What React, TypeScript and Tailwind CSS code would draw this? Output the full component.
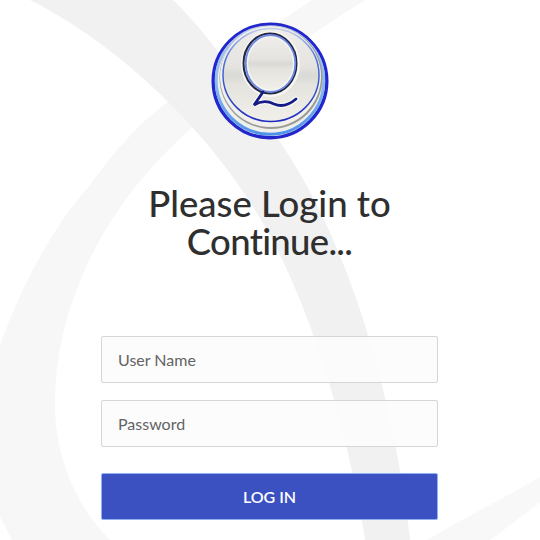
const fieldClass =
  "h-[47px] w-full rounded-[2px] border border-[#d6d6d6] bg-[#fcfcfc]/90 px-4 text-[16px] text-[#555] placeholder:text-[#636363] outline-none";

function Backdrop() {
  return (
    <svg className="absolute inset-0 h-full w-full" viewBox="0 0 540 540">
      <path
        d="M365 0C310 35 250 75 193 127C130 180 55 280 55 405C55 455 75 505 110 540H12L0 517V345C20 290 50 230 90 185C115 150 140 122 170 100C210 70 260 35 312 0Z"
        fill="#f7f7f7"
      />
      <path
        d="M30 0C110 40 200 120 255 210C300 280 345 410 365 540H410C398 430 360 260 282 145C250 95 210 35 173 0Z"
        fill="#f1f1f1"
      />
      <path d="M540 477C505 498 465 517 427 540H490C505 530 522 515 540 503Z" fill="#f8f8f8" />
    </svg>
  );
}

function Logo() {
  return (
    <svg className="block h-[120px] w-[120px]" viewBox="0 0 120 120">
      <defs>
        <linearGradient id="face" x1="0" y1="0" x2="0" y2="1">
          <stop offset="0" stopColor="#efeeea" />
          <stop offset="0.42" stopColor="#e4e3df" />
          <stop offset="0.5" stopColor="#d9d9d5" />
          <stop offset="0.6" stopColor="#e4e3de" />
          <stop offset="1" stopColor="#f0efe9" />
        </linearGradient>
        <linearGradient id="rim" x1="0" y1="0" x2="0" y2="1">
          <stop offset="0" stopColor="#b8c8ec" />
          <stop offset="0.5" stopColor="#8cbcf0" />
          <stop offset="1" stopColor="#4f92ea" />
        </linearGradient>
        <linearGradient id="ring" x1="0" y1="0" x2="0" y2="1">
          <stop offset="0" stopColor="#c3cdea" />
          <stop offset="0.35" stopColor="#4a73d8" />
          <stop offset="1" stopColor="#1f2cc0" />
        </linearGradient>
        <filter id="soft">
          <feGaussianBlur stdDeviation="0.35" />
        </filter>
      </defs>
      <g filter="url(#soft)">
        <circle cx="60" cy="60" r="56.8" fill="#eeeeea" stroke="#2226cc" strokeWidth="3.4" />
        <circle cx="60" cy="59.5" r="53.8" fill="none" stroke="url(#rim)" strokeWidth="3" />
        <circle cx="61" cy="56.5" r="51.5" fill="#9b9b96" />
        <circle cx="60.5" cy="55.5" r="50.5" fill="#f1f0ec" />
        <ellipse cx="61" cy="54" rx="48" ry="46.5" fill="url(#face)" stroke="url(#ring)" strokeWidth="1.5" />
        <path d="M53 71C49 77 46 81 44 84C52 79 58 80 64 83C71 86 79 84 86 78" fill="none" stroke="#fbfbf8" strokeWidth="5" strokeLinecap="round" />
        <ellipse cx="60.5" cy="43" rx="27.5" ry="31" fill="none" stroke="#f5f5f2" strokeWidth="4" />
        <ellipse cx="60" cy="42.5" rx="26.5" ry="30" fill="#dfdeda" stroke="#23263f" strokeWidth="2" />
        <ellipse cx="60.5" cy="42.5" rx="24.8" ry="28.3" fill="none" stroke="#6c88ea" strokeWidth="1.8" />
        <ellipse cx="60.5" cy="42.5" rx="23" ry="26.5" fill="url(#face)" stroke="#f6f6f4" strokeWidth="1.2" />
        <path d="M53 71C49 77 46 81 44 84C52 79 58 80 64 83C71 86 79 84 86 78" fill="none" stroke="#141a86" strokeWidth="2.8" strokeLinecap="round" />
      </g>
    </svg>
  );
}

export default function App() {
  return (
    <div
      className="relative h-[540px] w-[540px] overflow-hidden bg-white"
      style={{ fontFamily: "Lato, 'Open Sans', sans-serif" }}
    >
      <Backdrop />
      <div className="relative flex w-[539px] flex-col items-center pt-[21px]">
        <Logo />
        <h1 className="mt-[43px] w-[300px] text-center text-[36.5px] leading-[38px] font-medium text-[#2f2f2f]">
          <span className="inline-block">Please Login to</span>{" "}
          <span className="inline-block tracking-[-0.7px]">Continue...</span>
        </h1>
        <form className="mt-[76px] flex w-[337px] flex-col">
          <input className={fieldClass} placeholder="User Name" />
          <input className={`${fieldClass} mt-[17px]`} placeholder="Password" type="password" />
          <button
            type="button"
            className="mt-[26px] h-[47px] rounded-[2px] border border-[#8fb2ee] bg-[#3b51c1] text-[16px] font-semibold text-white"
          >
            LOG IN
          </button>
        </form>
      </div>
    </div>
  );
}
